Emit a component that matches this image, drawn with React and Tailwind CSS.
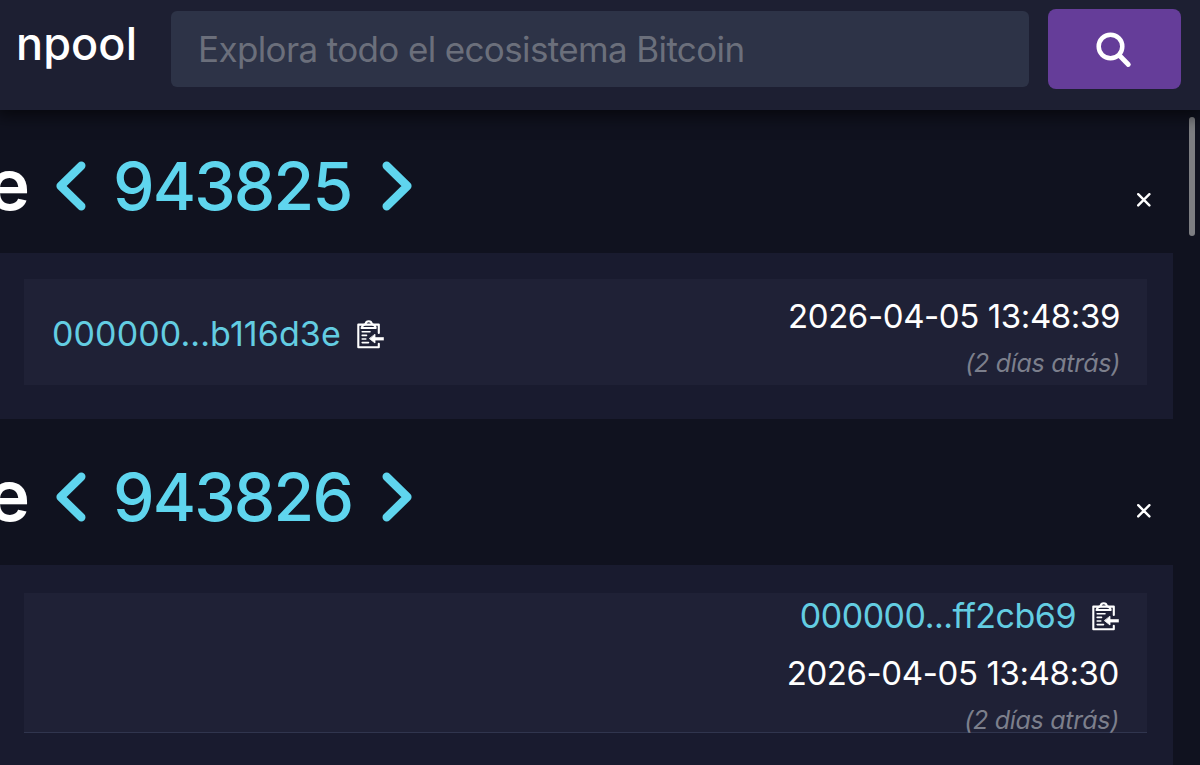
const blocks = [
  { height: '943825', hash: '000000...b116d3e', time: '2026-04-05 13:48:39', ago: '(2 días atrás)' },
  { height: '943826', hash: '000000...ff2cb69', time: '2026-04-05 13:48:30', ago: '(2 días atrás)' },
];

function SearchIcon() {
  return (
    <svg width="36" height="36" viewBox="0 0 36 36" className="mt-[1px] mr-[1px]" fill="none" stroke="currentColor" strokeLinecap="round">
      <circle cx="14.5" cy="14.5" r="11.8" strokeWidth="4.5" />
      <path d="M23.5 23.5L32.3 32.5" strokeWidth="4.8" />
    </svg>
  );
}

function Chevron({ flip }) {
  return (
    <svg
      width="30"
      height="50"
      viewBox="0 0 30 50"
      className={flip ? 'shrink-0 -scale-x-100' : 'shrink-0'}
      fill="none"
      stroke="currentColor"
      strokeWidth="8.4"
      strokeLinecap="round"
      strokeLinejoin="round"
    >
      <path d="M25.3 4.7L4.6 25L25.3 45.3" />
    </svg>
  );
}

function CloseIcon() {
  return (
    <svg width="14" height="14" viewBox="0 0 14 14" fill="none" stroke="currentColor" strokeWidth="2.4" strokeLinecap="round">
      <path d="M1.2 1.2L12.4 12.4M12.4 1.2L1.2 12.4" />
    </svg>
  );
}

function ClipboardIcon() {
  return (
    <svg width="27" height="29" viewBox="0 0 27 29" className="shrink-0" fill="none" stroke="currentColor" strokeLinecap="round" strokeLinejoin="round">
      <path d="M21.8 13V4.6H1.3V27.2H21.8V23.8" strokeWidth="2.1" />
      <path d="M4.4 8H18.8" strokeWidth="1.8" />
      <path d="M5 7C5.4 4.6 7.6 5 8.6 3.8C9.2 0.4 14.2 0.4 14.8 3.8C15.8 5 18 4.6 18.4 7" strokeWidth="2.1" />
      <path d="M5.2 11.8H13M5.2 15.4H9.5M5.2 19H8.8M5.2 22.6H11.5" strokeWidth="1.6" />
      <path d="M26.8 18.8H17" strokeWidth="3.2" strokeLinecap="butt" />
      <path d="M18 14.6V23L12.6 18.8Z" fill="currentColor" strokeWidth="0.8" />
    </svg>
  );
}

function Header() {
  return (
    <header className="relative z-10 flex h-[110px] shrink-0 items-start bg-[#1d1f32] shadow-[0_2px_16px_4px_rgba(0,0,0,0.6)]">
      <div className="w-[171px] pt-[16px] pl-[16px] text-[45px] leading-[56px] font-medium tracking-[0.1px]">npool</div>
      <input
        type="text"
        placeholder="Explora todo el ecosistema Bitcoin"
        className="mt-[11px] h-[76px] w-[858px] rounded-md bg-[#2d3347] px-[27px] text-[35px] tracking-[-0.63px] text-white outline-none placeholder:text-[#6b6f7b]"
      />
      <button aria-label="Buscar" className="mt-[9px] ml-[19px] flex h-[80px] w-[133px] items-center justify-center rounded-lg bg-[#653d99]">
        <SearchIcon />
      </button>
    </header>
  );
}

function BlockTitle({ height }) {
  return (
    <div className="flex items-start justify-between pr-[49px] pl-[56px]">
      <h1 className="relative flex items-center text-[66px] leading-[80px] font-medium text-[#5fd5ee]">
        <span className="absolute right-full mr-[26px] pb-[4px] text-[71px] font-semibold text-white">Bloque</span>
        <Chevron />
        <span className="ml-[27px] w-[269px] tracking-[-1.8px]">{height}</span>
        <Chevron flip />
      </h1>
      <button aria-label="Cerrar" className="mt-[47px]">
        <CloseIcon />
      </button>
    </div>
  );
}

function Hash({ className, children }) {
  return (
    <div className="flex items-center gap-[16px]">
      <a className={`text-[34px] leading-[46px] text-[#63cde2] ${className}`}>{children}</a>
      <ClipboardIcon />
    </div>
  );
}

function Timestamp({ time, ago }) {
  return (
    <div className="text-right">
      <div className="text-[33px] leading-[44px] tracking-[-0.4px]">{time}</div>
      <div className="mt-[7px] text-[25px] leading-[36px] tracking-[-0.3px] text-[#7c7f8c] italic">{ago}</div>
    </div>
  );
}

export default function App() {
  const [first, second] = blocks;

  return (
    <div className="flex h-[765px] w-[1200px] flex-col overflow-hidden bg-[#10121f] font-['Inter','Liberation_Sans',sans-serif] text-white">
      <Header />
      <main className="relative flex-1">
        <section>
          <div className="h-[143px] pt-[36px]">
            <BlockTitle height={first.height} />
          </div>
          <div className="mr-[27px] h-[166px] bg-[#191b2f] pt-[26px] pr-[26px] pl-[24px]">
            <div className="flex h-[106px] justify-between bg-[#1f2136] pr-[27px] pl-[28px]">
              <div className="pt-[32px]">
                <Hash className="tracking-[0.1px]">{first.hash}</Hash>
              </div>
              <div className="pt-[15px]">
                <Timestamp time={first.time} ago={first.ago} />
              </div>
            </div>
          </div>
        </section>

        <section>
          <div className="h-[146px] pt-[38px]">
            <BlockTitle height={second.height} />
          </div>
          <div className="mr-[27px] h-[200px] bg-[#191b2f] pt-[28px] pr-[26px] pl-[24px]">
            <div className="flex h-[140px] flex-col items-end border-b border-[#30354e] bg-[#1f2136] pr-[28px]">
              <Hash className="tracking-[-0.5px]">{second.hash}</Hash>
              <div className="mt-[12px]">
                <Timestamp time={second.time} ago={second.ago} />
              </div>
            </div>
          </div>
        </section>

        {/* scrollbar thumb */}
        <div className="absolute top-[7px] right-[5px] h-[119px] w-[6px] rounded-full bg-[#7d7e82]" />
      </main>
    </div>
  );
}
